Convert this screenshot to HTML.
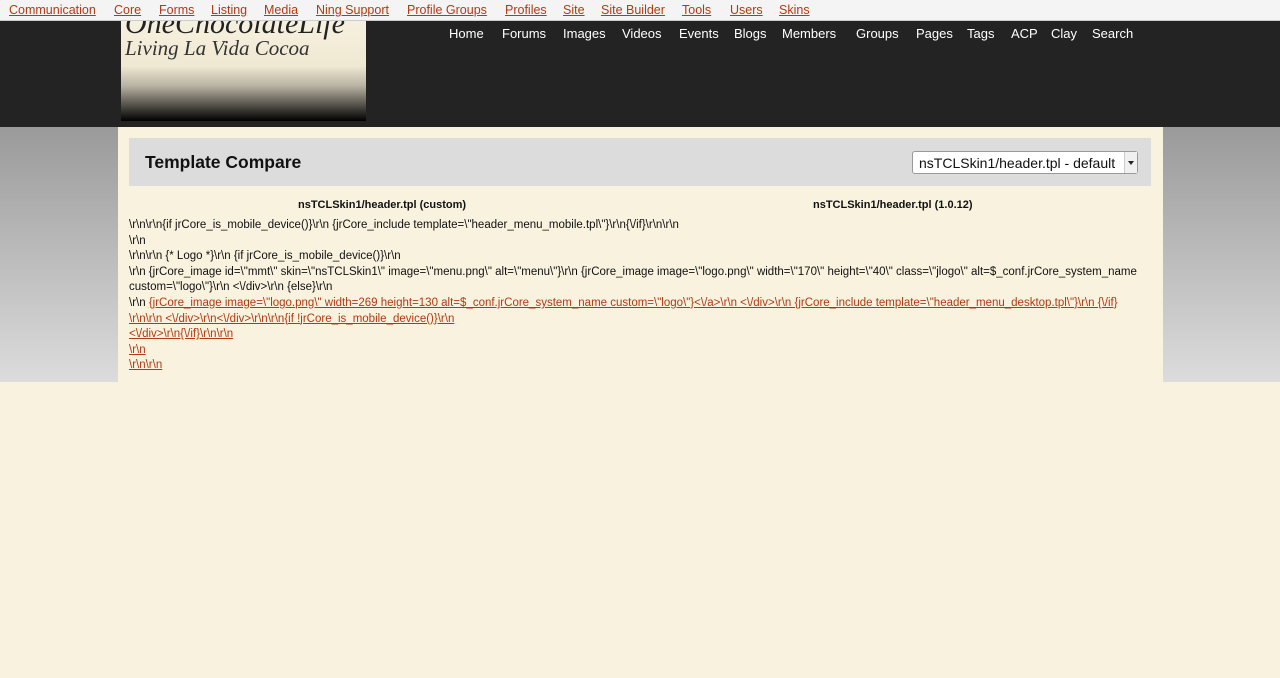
<!DOCTYPE html>
<html><head><meta charset="utf-8"><style>
*{margin:0;padding:0;box-sizing:border-box}
body{width:1280px;height:678px;background:#f8f2de;font-family:"Liberation Sans",sans-serif;overflow:hidden;position:relative}
.top{position:absolute;left:0;top:0;width:1280px;height:21px;background:#f4f4f4;border-bottom:1px solid #ccc;font-size:12.5px;}
.top a{position:absolute;top:3px;color:#b03a12;text-decoration:underline}
.hdr{position:absolute;left:0;top:21px;width:1280px;height:106px;background:#232323}
.logo{position:absolute;left:121px;top:21px;width:245px;height:100px;background:linear-gradient(#f6f1df 0%,#efe8d2 45%,#b8b2a2 65%,#000 100%);overflow:hidden}
.logo .l1{position:absolute;left:4px;top:-14px;font-family:"Liberation Serif",serif;font-size:30px;color:#222;font-style:italic}
.logo .l2{position:absolute;left:4px;top:15px;font-family:"Liberation Serif",serif;font-size:21px;color:#333;font-style:italic}
.nav{position:absolute;top:26px;color:#fff;font-size:13px}
.gray{position:absolute;left:0;top:127px;width:1280px;height:255px;background:linear-gradient(#9a9a9a,#dcdcdc)}
.main{position:absolute;left:118px;top:127px;width:1045px;height:255px;background:#f8f2de}
.panel{position:absolute;left:129px;top:138px;width:1022px;height:48px;background:#dcdcdc}
.panel h1{position:absolute;left:16px;top:14px;font-size:17.5px;font-weight:bold;color:#111}
.sel{position:absolute;left:783px;top:13px;width:226px;height:23px;background:#fff;border:1px solid #999;border-radius:3px;font-size:14px;padding:3px 0 0 6px;color:#111}
.sel:after{content:"";position:absolute;right:0;top:0;width:12px;height:21px;border-left:1px solid #ccc;background:#f0f0f0}
.sel i{position:absolute;right:3px;top:9px;border:3px solid transparent;border-top:4px solid #222;z-index:2}
.ch{position:absolute;top:199px;font-size:11px;font-weight:bold;color:#111}
.code{position:absolute;left:129px;top:218px;width:1030px;font-size:11.5px;line-height:15.6px;color:#111}
.code u{color:#b03a12}
</style></head><body>
<div class="top">
<a style="left:9px">Communication</a><a style="left:114px">Core</a><a style="left:159px">Forms</a><a style="left:211px">Listing</a><a style="left:264px">Media</a><a style="left:316px">Ning Support</a><a style="left:407px">Profile Groups</a><a style="left:505px">Profiles</a><a style="left:563px">Site</a><a style="left:601px">Site Builder</a><a style="left:682px">Tools</a><a style="left:730px">Users</a><a style="left:779px">Skins</a>
</div>
<div class="hdr"></div>
<div class="logo"><div class="l1">OneChocolateLife</div><div class="l2">Living La Vida Cocoa</div></div>
<span class="nav" style="left:449px">Home</span><span class="nav" style="left:502px">Forums</span><span class="nav" style="left:563px">Images</span><span class="nav" style="left:622px">Videos</span><span class="nav" style="left:679px">Events</span><span class="nav" style="left:734px">Blogs</span><span class="nav" style="left:782px">Members</span><span class="nav" style="left:856px">Groups</span><span class="nav" style="left:916px">Pages</span><span class="nav" style="left:967px">Tags</span><span class="nav" style="left:1011px">ACP</span><span class="nav" style="left:1051px">Clay</span><span class="nav" style="left:1092px">Search</span>
<div class="gray"></div>
<div class="main"></div>
<div class="panel"><h1>Template Compare</h1><div class="sel">nsTCLSkin1/header.tpl - default<i></i></div></div>
<div class="ch" style="left:298px">nsTCLSkin1/header.tpl (custom)</div>
<div class="ch" style="left:813px">nsTCLSkin1/header.tpl (1.0.12)</div>
<div class="code">
\r\n\r\n{if jrCore_is_mobile_device()}\r\n {jrCore_include template=\"header_menu_mobile.tpl\"}\r\n{\/if}\r\n\r\n<br>
\r\n<br>
\r\n\r\n {* Logo *}\r\n {if jrCore_is_mobile_device()}\r\n<br>
\r\n {jrCore_image id=\"mmt\" skin=\"nsTCLSkin1\" image=\"menu.png\" alt=\"menu\"}\r\n {jrCore_image image=\"logo.png\" width=\"170\" height=\"40\" class=\"jlogo\" alt=$_conf.jrCore_system_name custom=\"logo\"}\r\n &lt;\/div&gt;\r\n {else}\r\n<br>
\r\n <u>{jrCore_image image=\"logo.png\" width=269 height=130 alt=$_conf.jrCore_system_name custom=\"logo\"}&lt;\/a&gt;\r\n &lt;\/div&gt;\r\n {jrCore_include template=\"header_menu_desktop.tpl\"}\r\n {\/if}</u><br>
<u>\r\n\r\n &lt;\/div&gt;\r\n&lt;\/div&gt;\r\n\r\n{if !jrCore_is_mobile_device()}\r\n</u><br>
<u>&lt;\/div&gt;\r\n{\/if}\r\n\r\n</u><br>
<u>\r\n</u><br>
<u>\r\n\r\n</u>
</div>
</body></html>
